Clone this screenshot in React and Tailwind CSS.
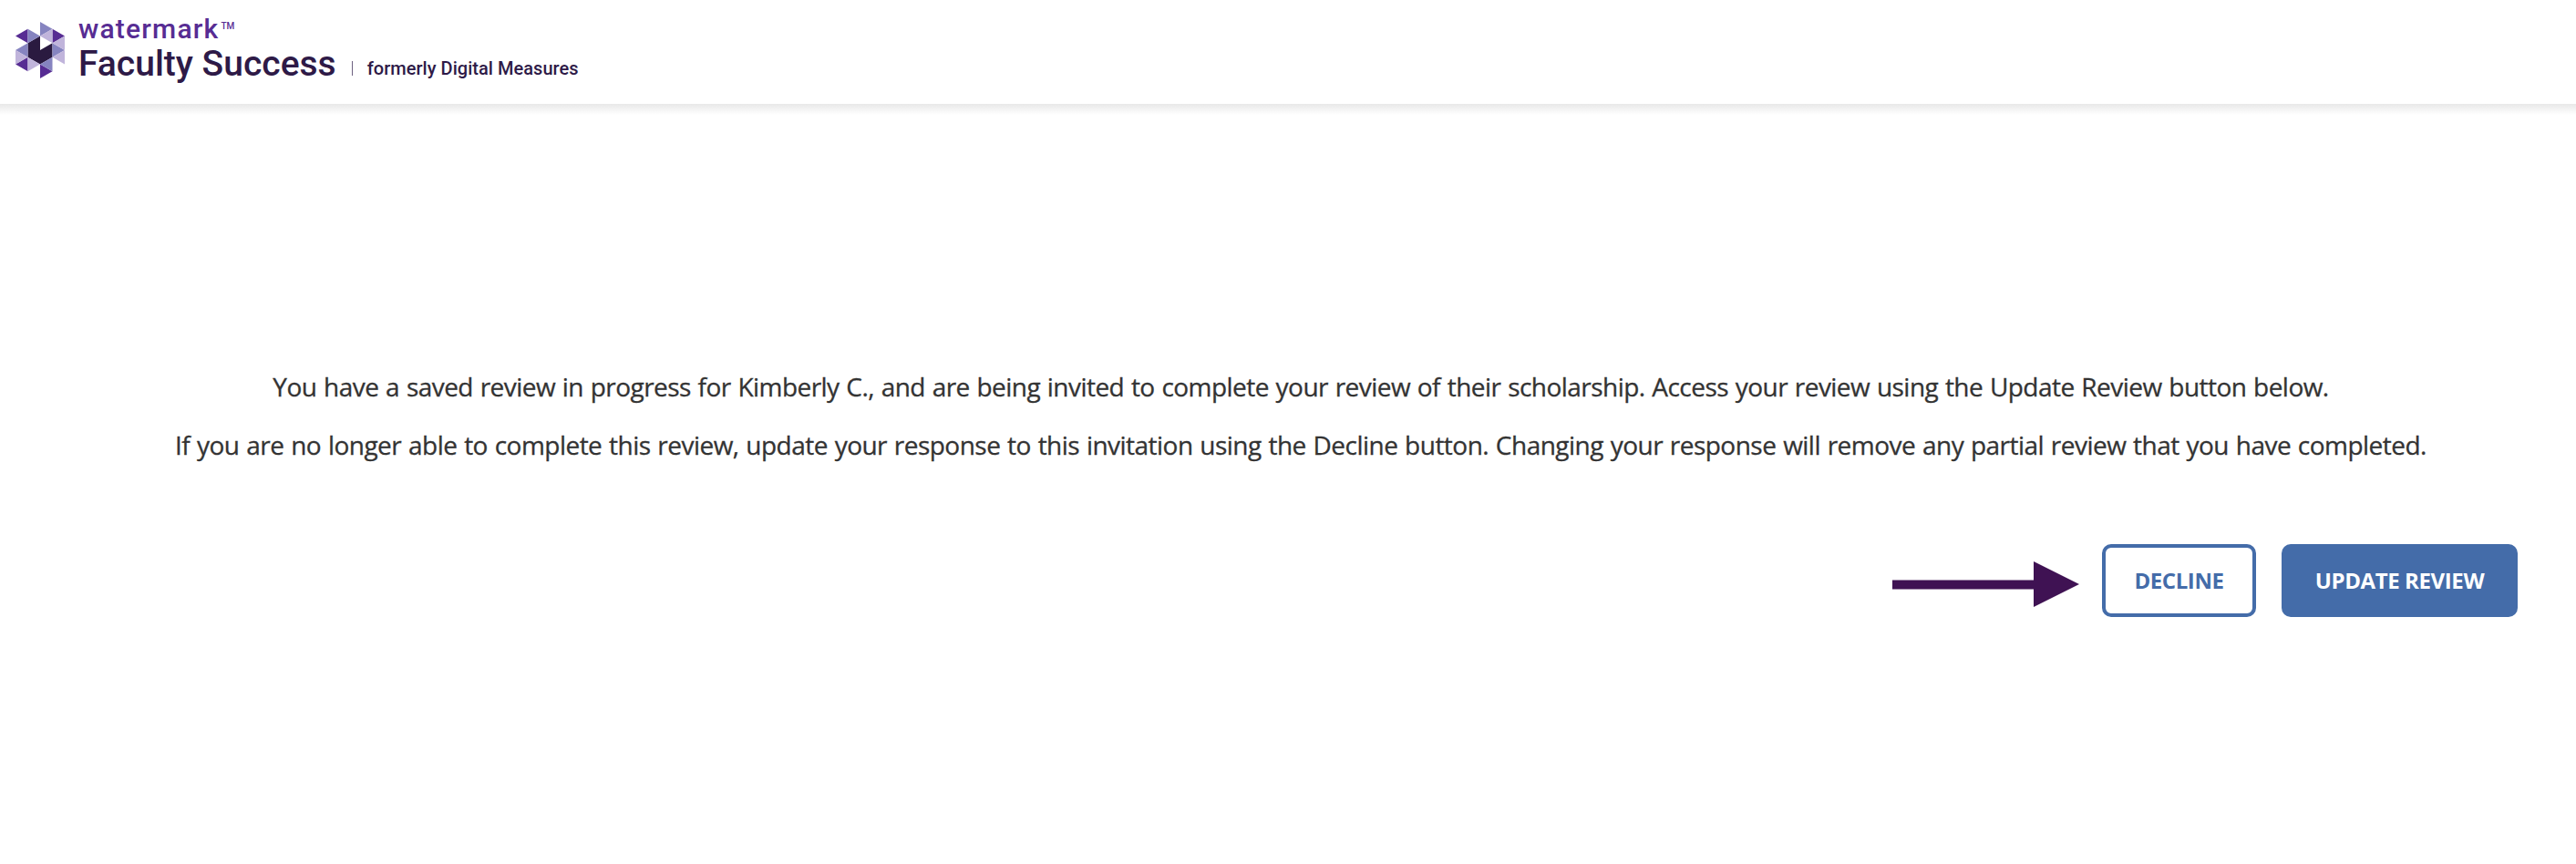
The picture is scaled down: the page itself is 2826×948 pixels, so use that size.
import React from "react";

const LogoMark = () => {
  return (
    <svg width="56" height="64" viewBox="0 0 56 64" className="shrink-0">
      {/* dark core */}
      <path d="M13.5 23.2 L27 15.5 V31 L40.5 23.2 V38.8 L27 46.5 L13.5 38.8 Z" fill="#2a1a40" />

      {/* purple */}
      <path d="M0 15.5 L13.5 7.7 V23.2 Z" fill="#572c93" />
      <path d="M40.5 7.7 L54 15.5 L40.5 23.2 Z" fill="#572c93" />
      <path d="M0 46.5 L13.5 38.8 V54.3 Z" fill="#572c93" />
      <path d="M27 46.5 L40.5 54.3 L27 62 Z" fill="#572c93" />

      {/* blue */}
      <path d="M13.5 7.7 L27 15.5 L13.5 23.2 Z" fill="#8684c0" />
      <path d="M27 0 L40.5 7.7 L27 15.5 Z" fill="#8684c0" />
      <path d="M0 31 L13.5 23.2 V38.8 Z" fill="#8684c0" />
      <path d="M40.5 23.2 L54 31 L40.5 38.8 Z" fill="#8684c0" />
      <path d="M27 46.5 L40.5 38.8 V54.3 Z" fill="#8684c0" />

      {/* light */}
      <path d="M27 15.5 L40.5 7.7 V23.2 Z" fill="#c0b4db" />
      <path d="M40.5 23.2 L54 15.5 V31 Z" fill="#c0b4db" />
      <path d="M40.5 38.8 L54 31 V46.5 Z" fill="#c0b4db" />
      <path d="M0 31 L13.5 38.8 L0 46.5 Z" fill="#c0b4db" />
      <path d="M13.5 38.8 L27 46.5 L13.5 54.3 Z" fill="#c0b4db" />
    </svg>
  );
};

const Arrow = () => {
  return (
    <svg width="205" height="50" viewBox="0 0 205 50" className="mt-[19px] mr-[25px] shrink-0">
      <path d="M0 20.5 H155 V0 L205 25 L155 50 V30.5 H0 Z" fill="#3f1253" />
    </svg>
  );
};

const App = () => {
  return (
    <div className="h-[948px] w-full overflow-hidden bg-white font-['Open_Sans',sans-serif] text-[#333]">
      <header className="flex h-[114px] items-start pl-[17px] pt-[24px]">
        <LogoMark />
        <div className="ml-[13px] -mt-[9px] whitespace-nowrap font-['Roboto',sans-serif]">
          <div className="flex h-[32px] text-[#572c93]">
            <span className="text-[30px] leading-[34px] font-medium tracking-[1.2px]">watermark</span>
            <span className="ml-[2px] text-[10px] leading-[28px] font-medium">TM</span>
          </div>
          <div className="flex items-baseline text-[#2e1a47]">
            <span className="text-[39px] leading-[46px] font-medium">Faculty Success</span>
            <span className="ml-[17px] h-[16px] w-px bg-[#6d6180]"></span>
            <span className="ml-[16px] -translate-y-px text-[20px] font-medium tracking-[0.04px]">formerly Digital Measures</span>
          </div>
        </div>
      </header>
      <div className="h-[12px] bg-linear-to-b from-[#e8e8e8] to-white"></div>

      <main className="flex flex-col items-center pt-[278px] pl-[28px]">
        <p className="text-[28px] leading-[40px] tracking-[-0.54px] whitespace-nowrap [word-spacing:1px] [-webkit-text-stroke:0.3px_#333]">
          You have a saved review in progress for Kimberly C., and are being invited to complete your review of their scholarship. Access your review using the Update Review button below.
        </p>
        <p className="mt-[24px] text-[28px] leading-[40px] tracking-[-0.52px] whitespace-nowrap [word-spacing:1px] [-webkit-text-stroke:0.3px_#333]">
          If you are no longer able to complete this review, update your response to this invitation using the Decline button. Changing your response will remove any partial review that you have completed.
        </p>
        <div className="mt-[89px] flex w-full justify-end pr-[64px]">
          <Arrow />
          <button className="h-[80px] w-[169px] rounded-[10px] border-4 border-[#446ca9] text-[24px] font-bold tracking-[-0.4px] text-[#446ca9]">
            DECLINE
          </button>
          <button className="ml-[28px] h-[80px] w-[259px] rounded-[10px] bg-[#446ca9] text-[24px] font-bold tracking-[-0.4px] text-white">
            UPDATE REVIEW
          </button>
        </div>
      </main>
    </div>
  );
};

export default App;
